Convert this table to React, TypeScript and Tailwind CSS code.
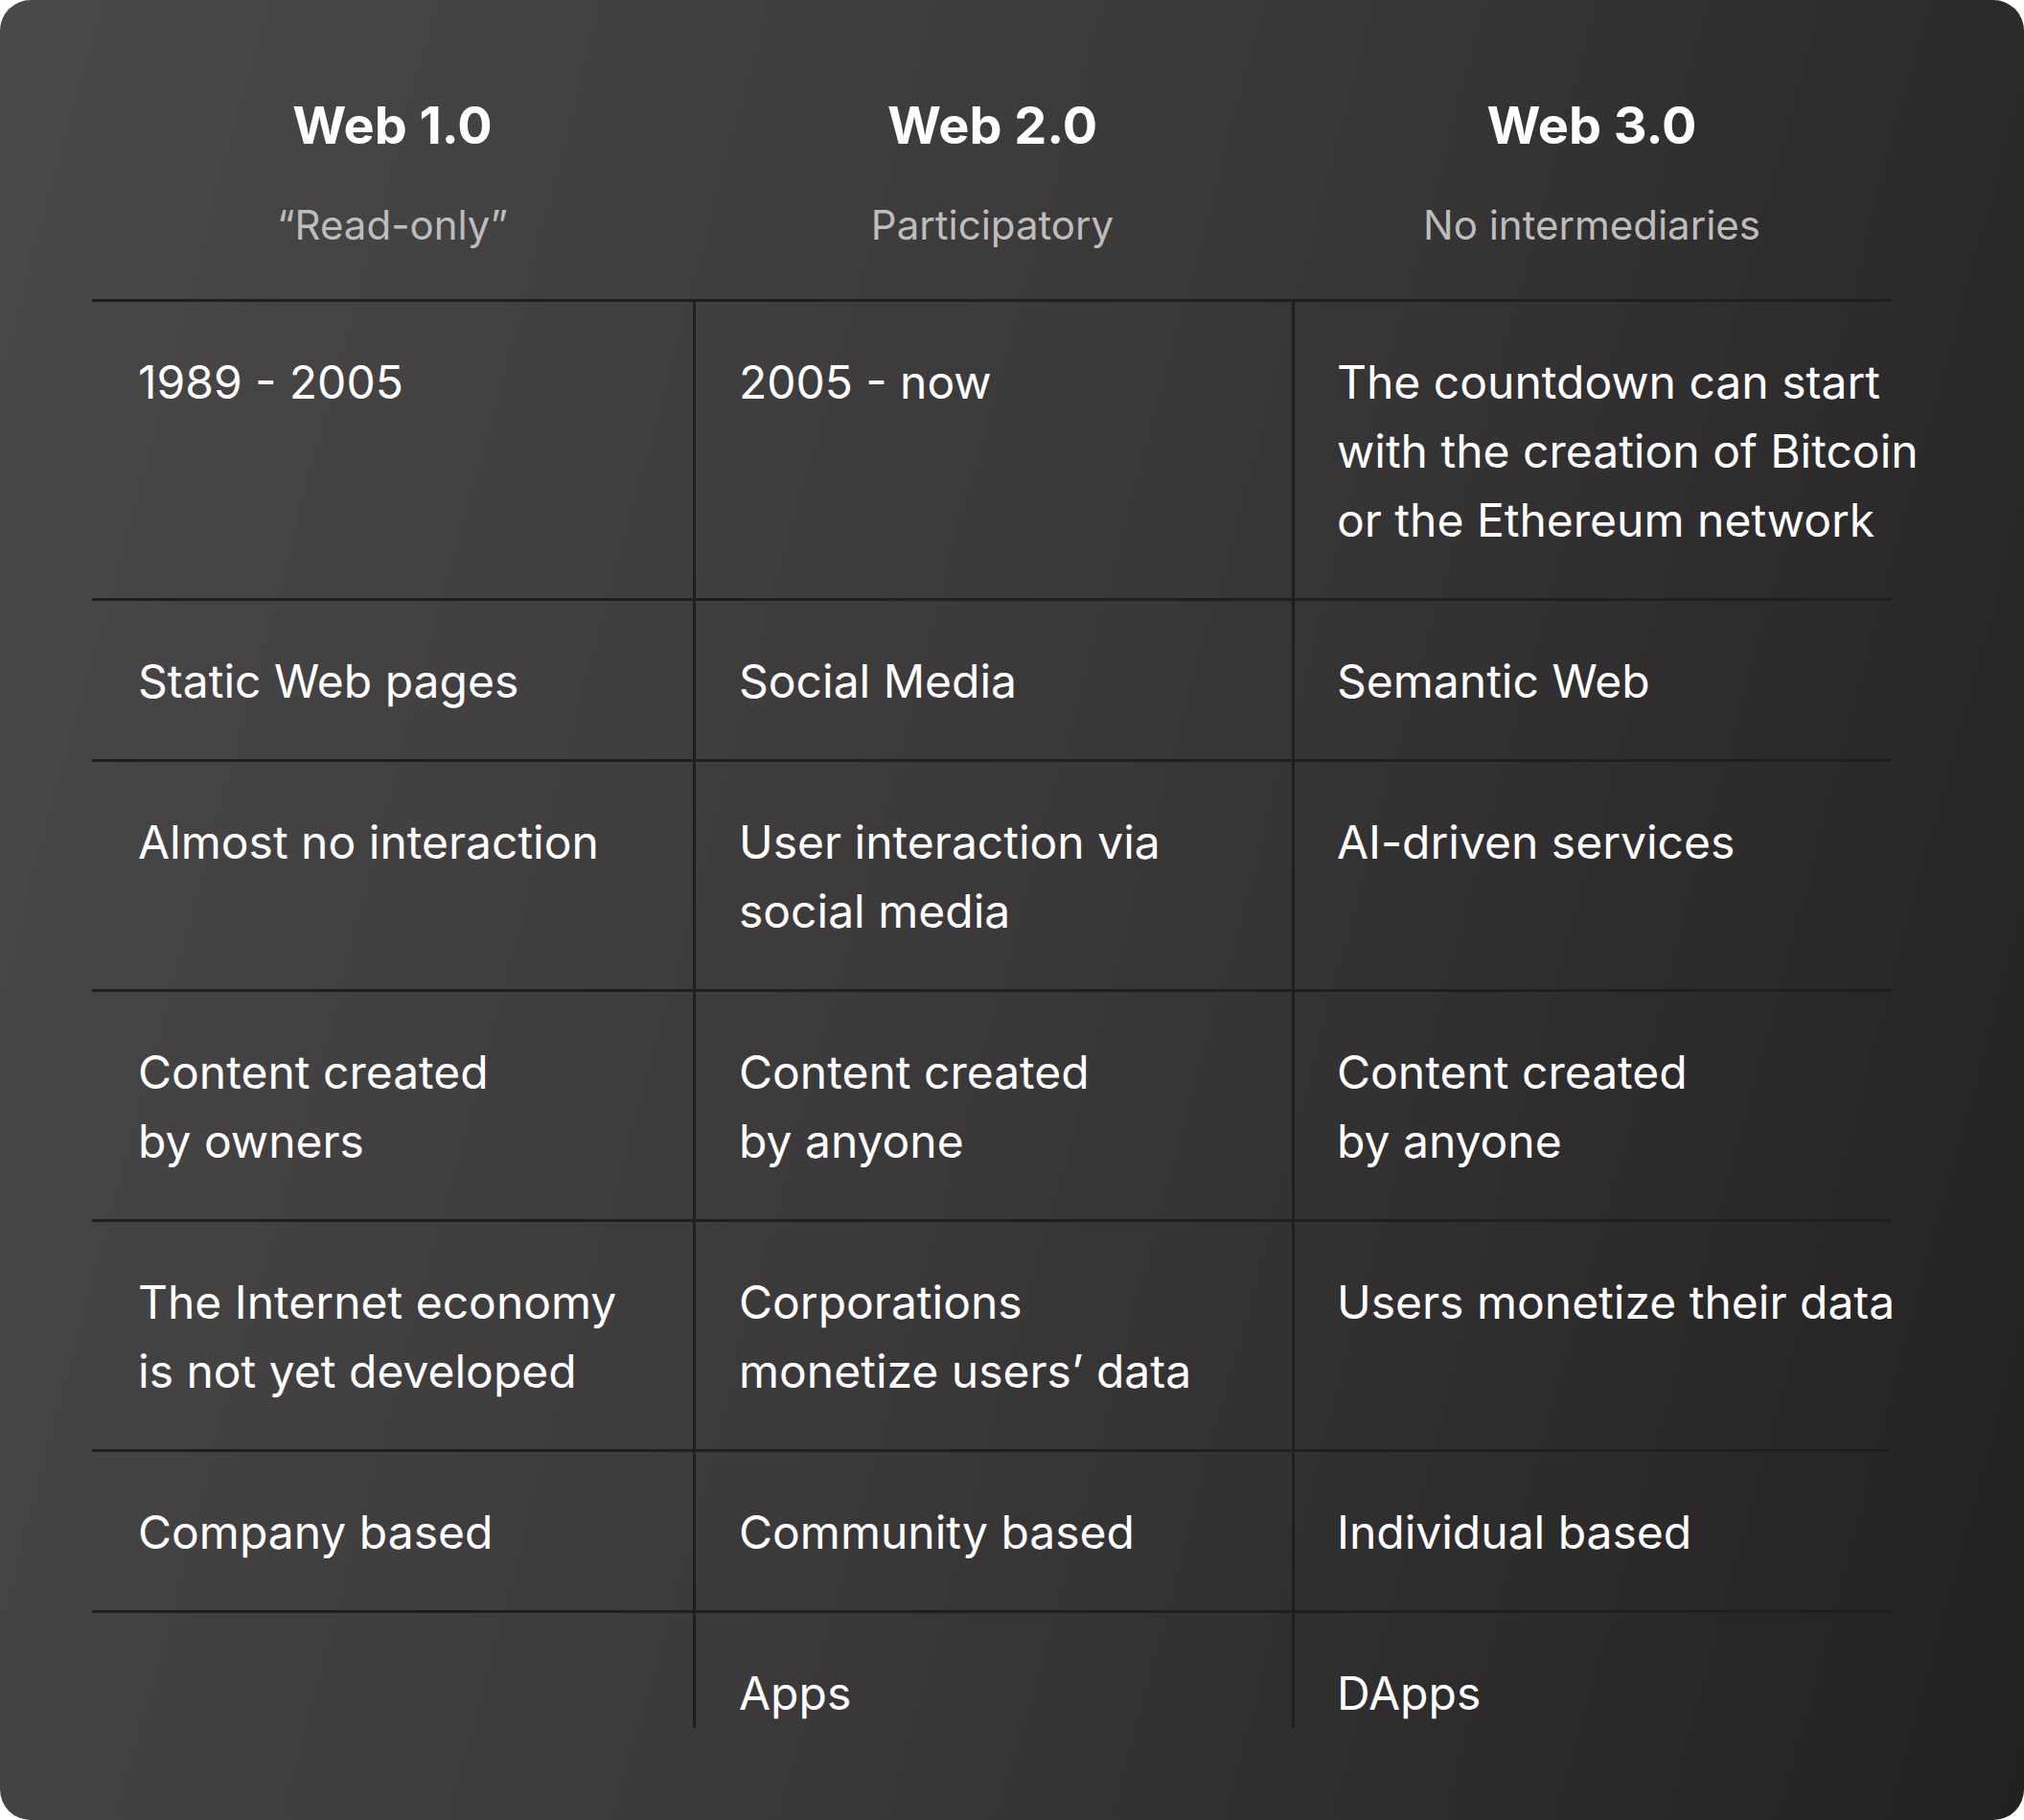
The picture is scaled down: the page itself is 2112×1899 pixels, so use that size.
const columns = [
  { title: "Web 1.0", subtitle: "\u201cRead-only\u201d" },
  { title: "Web 2.0", subtitle: "Participatory" },
  { title: "Web 3.0", subtitle: "No intermediaries" },
];

const rows: string[][][] = [
  [["1989 - 2005"], ["2005 - now"], ["The countdown can start", "with the creation of Bitcoin", "or the Ethereum network"]],
  [["Static Web pages"], ["Social Media"], ["Semantic Web"]],
  [["Almost no interaction"], ["User interaction via", "social media"], ["AI-driven services"]],
  [["Content created", "by owners"], ["Content created", "by anyone"], ["Content created", "by anyone"]],
  [["The Internet economy", "is not yet developed"], ["Corporations", "monetize users\u2019 data"], ["Users monetize their data"]],
  [["Company based"], ["Community based"], ["Individual based"]],
  [[], ["Apps"], ["DApps"]],
];

const padLeft = ["pl-12", "pl-[45px]", "pl-[44px]"];

export default function App() {
  return (
    <main className="min-h-screen bg-white">
      <div
        className="w-[2112px] h-[1899px] rounded-[32px] bg-[linear-gradient(105deg,#4a4848_0%,#3b3839_50%,#232021_100%)] pl-[96px] pt-[96px] text-white"
        style={{ fontFamily: "Inter, 'Noto Sans', sans-serif" }}
      >
        <div className="grid w-[1878px] grid-cols-[627px_625px_626px]">
          {columns.map((c) => (
            <div key={c.title} className="flex flex-col items-center border-b-[3px] border-[#1c1f23] pb-[46px]">
              <h2 className="text-[54px] font-bold leading-[70px]">{c.title}</h2>
              <p className="mt-[37px] text-[42px] leading-[63px] text-[#bdbdbd]">{c.subtitle}</p>
            </div>
          ))}
          {rows.map((row, ri) => {
            const last = ri === rows.length - 1;
            return row.map((lines, ci) => (
              <div
                key={ri + "-" + ci}
                className={
                  "whitespace-nowrap pt-12 text-[48px] leading-[72px] " +
                  padLeft[ci] +
                  " " +
                  (last ? "" : "border-b-[3px] border-[#1c1f23] pb-[45px] ") +
                  (ci > 0 ? "border-l-[3px] border-l-[#1c1f23]" : "")
                }
              >
                {lines.map((l, i) => (
                  <div key={i}>{l}</div>
                ))}
              </div>
            ));
          })}
        </div>
      </div>
    </main>
  );
}
